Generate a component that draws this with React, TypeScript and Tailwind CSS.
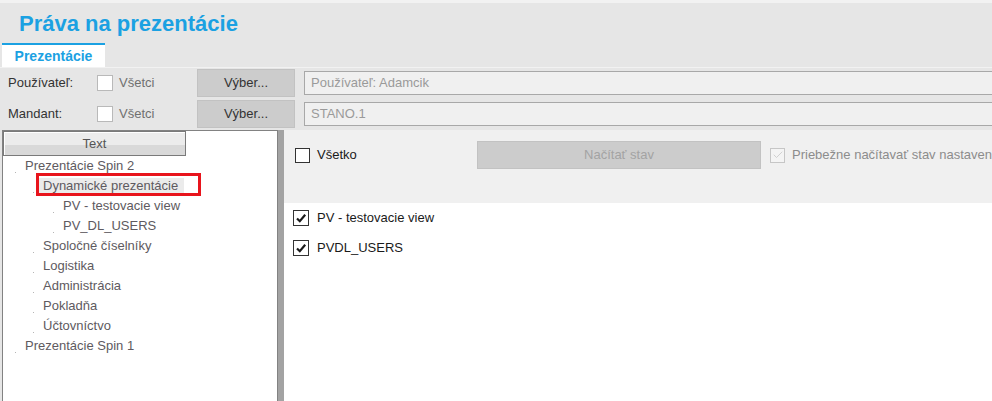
import { Check } from "lucide-react";

const font = "font-['Liberation_Sans',Arial,sans-serif]";

const tree = [
  { label: "Prezentácie Spin 2", level: 1 },
  { label: "Dynamické prezentácie", level: 2, selected: true },
  { label: "PV - testovacie view", level: 3 },
  { label: "PV_DL_USERS", level: 3 },
  { label: "Spoločné číselníky", level: 2 },
  { label: "Logistika", level: 2 },
  { label: "Administrácia", level: 2 },
  { label: "Pokladňa", level: 2 },
  { label: "Účtovníctvo", level: 2 },
  { label: "Prezentácie Spin 1", level: 1 },
];

const indent: Record<number, string> = {
  1: "pl-[12px]",
  2: "pl-[30px]",
  3: "pl-[50px]",
};

function FilterRow({ label, value }: { label: string; value: string }) {
  return (
    <div className="flex h-[28px] items-center">
      <span className="w-[97px] shrink-0 pl-[8px] text-[13px] text-[#333333]">{label}</span>
      <span className="h-[16px] w-[16px] shrink-0 border border-[#b9b9b9] bg-white" />
      <span className="ml-[6px] w-[78px] shrink-0 text-[13px] text-[#707070]">Všetci</span>
      <button className="flex h-[28px] w-[98px] shrink-0 items-center justify-center border border-[#c2c2c2] bg-[#cccccc] text-[13px] text-[#333333]">
        Výber...
      </button>
      <div className="ml-[9px] flex h-[24px] w-[720px] shrink-0 items-center border border-[#a8a8a8] bg-[#f0f0f0] pl-[6px] text-[13px] text-[#9a9a9a]">
        {value}
      </div>
    </div>
  );
}

export default function App() {
  return (
    <div className={`${font} h-[401px] w-[992px] overflow-hidden bg-[#e6e6e6]`}>
      <div className="h-[3px] bg-[#f2f2f2]" />
      <div className="h-[40px] pl-[19px] pt-[8px] text-[22px] font-bold leading-[26px] text-[#1ba1e2]">
        Práva na prezentácie
      </div>

      <div className="flex h-[24px]">
        <div className="ml-[2px] w-[103px] border-t-2 border-[#1ba1e2] bg-white text-center text-[14px] font-bold leading-[22px] text-[#1ba1e2]">
          Prezentácie
        </div>
      </div>
      <div className="h-px bg-[#f2f2f2]" />

      <div className="flex flex-col gap-[3px] pt-[1px]">
        <FilterRow label="Používateľ:" value="Používateľ: Adamcik" />
        <FilterRow label="Mandant:" value="STANO.1" />
      </div>

      <div className="mt-[2px] flex h-[271px]">
        <div className="ml-[2px] w-[276px] shrink-0 border-x border-t border-[#828282] bg-white">
          <div className="flex h-[25px] w-[183px] items-center justify-center border border-[#7a7a7a] bg-[linear-gradient(to_bottom,#ececec_0%,#ececec_55%,#d9d9d9_56%,#d9d9d9_100%)] text-[13px] text-[#555555] shadow-[inset_1px_1px_0_#ffffff]">
            Text
          </div>
          {tree.map((item) => (
            <div key={item.label} className={`relative flex h-[20px] items-center ${indent[item.level]}`}>
              <span className="mt-[12px] h-px w-px bg-[#b5b5b5]" />
              {item.selected ? (
                <>
                  <span className="ml-[5px] flex h-[17px] w-[145px] items-center bg-[#ebebeb] pl-[4px] text-[13px] text-[#5e5a60]">
                    {item.label}
                  </span>
                  <span className="absolute left-[33px] top-[-3px] h-[23px] w-[165px] border-[3px] border-[#e8141c]" />
                </>
              ) : (
                <span className="ml-[9px] text-[13px] text-[#5e5a60]">{item.label}</span>
              )}
            </div>
          ))}
        </div>

        <div className="w-[6px] shrink-0 bg-[#a3a3a3]" />

        <div className="flex min-w-0 flex-1 flex-col overflow-hidden">
          <div className="flex h-[73px] items-start bg-[#f0f0f0] pl-[11px] pt-[11px]">
            <div className="flex h-[28px] w-[182px] shrink-0 items-center">
              <span className="h-[15px] w-[15px] shrink-0 border border-[#333333] bg-white" />
              <span className="ml-[7px] text-[13px] text-[#1a1a1a]">Všetko</span>
            </div>
            <button className="flex h-[28px] w-[284px] shrink-0 items-center justify-center border border-[#c2c2c2] bg-[#cccccc] text-[13px] text-[#a3a3a3]">
              Načítať stav
            </button>
            <div className="ml-[9px] flex h-[28px] shrink-0 items-center whitespace-nowrap">
              <span className="flex h-[15px] w-[15px] items-center justify-center border border-[#c6c6c6] bg-[#f4f4f4]">
                <Check size={12} strokeWidth={1.5} className="text-[#c4c4c4]" />
              </span>
              <span className="ml-[7px] text-[13px] text-[#8c8c8c]">Priebežne načítavať stav nastavení</span>
            </div>
          </div>

          <div className="flex-1 bg-white">
            {["PV - testovacie view", "PVDL_USERS"].map((name) => (
              <div key={name} className="flex h-[30px] items-center pl-[9px]">
                <span className="flex h-[16px] w-[16px] items-center justify-center border border-[#333333] bg-white">
                  <svg width="12" height="12" viewBox="0 0 12 12">
                    <path d="M2 6.5 L4.8 9.2 L10.2 2.8" fill="none" stroke="#1a1a1a" strokeWidth="2.2" />
                  </svg>
                </span>
                <span className="ml-[8px] text-[13px] text-[#1a1a1a]">{name}</span>
              </div>
            ))}
          </div>
        </div>
      </div>
    </div>
  );
}
